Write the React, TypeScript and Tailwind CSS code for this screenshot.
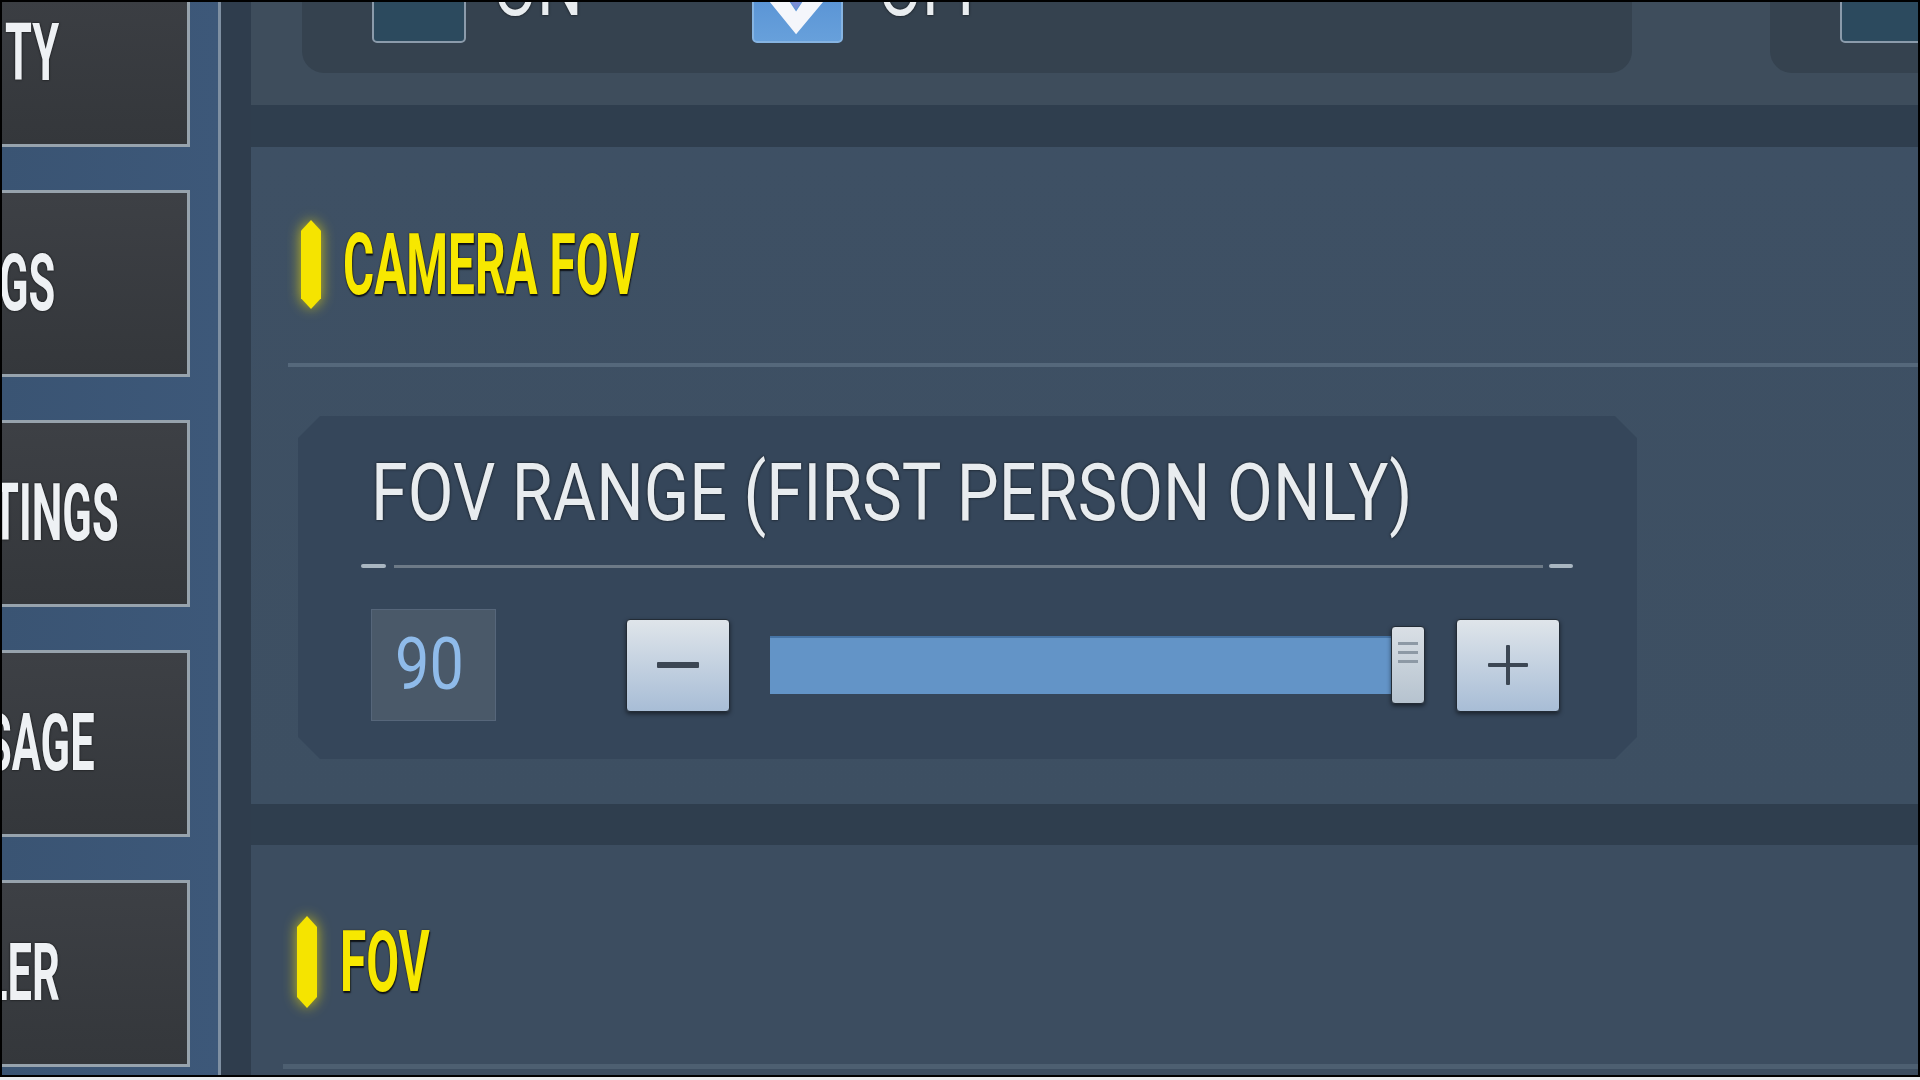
import React from 'react';

const navItems = [
  { label: 'TY', shift: 'ml-[3px]' },
  { label: 'GS', shift: 'ml-[-3px]' },
  { label: 'TINGS', shift: 'ml-[-10px]' },
  { label: 'SAGE', shift: 'ml-[-17px]' },
  { label: 'LER', shift: 'ml-[-18px]' },
];

function NavButton({ label, shift }: { label: string; shift: string }) {
  return (
    <div className="h-[187px] w-[188px] shrink-0 flex items-center overflow-hidden border-y-[3px] border-r-[3px] border-[#97a3ad] bg-gradient-to-b from-[#3d4045] to-[#34373b]">
      <span
        className={`inline-block whitespace-nowrap text-[79px] font-bold leading-none text-[#eef1f4] origin-left scale-x-[0.55] [text-shadow:0_0_3px_rgba(0,0,0,0.9)] ${shift}`}
      >
        {label}
      </span>
    </div>
  );
}

function Sidebar() {
  return (
    <div className="flex shrink-0">
      <div className="w-[216px] overflow-hidden bg-gradient-to-r from-[#3a5473] to-[#3d5879]">
        <div className="-mt-[42px] flex flex-col gap-[43px]">
          {navItems.map((item) => (
            <NavButton key={item.label} label={item.label} shift={item.shift} />
          ))}
        </div>
      </div>
      <div className="w-[3px] bg-[#7f90a2]" />
      <div className="w-[30px] bg-[#2f3d4d]" />
    </div>
  );
}

function Marker({ tall }: { tall: string }) {
  return (
    <div className="drop-shadow-[0_0_7px_rgba(245,225,0,0.75)]">
      <div className={`w-[20px] ${tall} bg-[#f5e400] [clip-path:polygon(50%_0,100%_12%,100%_88%,50%_100%,0_88%,0_12%)]`} />
    </div>
  );
}

function SectionTitle({ label, tall, gap }: { label: string; tall: string; gap: string }) {
  return (
    <div className={`flex items-center ${gap}`}>
      <Marker tall={tall} />
      <span className="inline-block whitespace-nowrap text-[86px] font-bold leading-none text-[#f7e800] origin-left scale-x-[0.555] [text-shadow:0_0_2px_#14140a,1px_2px_2px_rgba(0,0,0,0.8)]">
        {label}
      </span>
    </div>
  );
}

function CheckBox({ checked }: { checked?: boolean }) {
  if (checked) {
    return (
      <div className="w-[91px] h-[93px] shrink-0 rounded-[5px] border-2 border-[#86b4e2] bg-gradient-to-b from-[#4d88cf] to-[#67a0db] flex items-start justify-center">
        <svg width="91" height="93" viewBox="0 0 91 93">
          <polygon points="10,42 32,42 44,60 56,42 79,42 44,84" fill="#f4f6fb" />
          <polygon points="34,44 54,44 44,58" fill="#7b8fd6" />
        </svg>
      </div>
    );
  }
  return <div className="w-[94px] h-[93px] shrink-0 rounded-[5px] border-2 border-[#8b9bab] bg-[#2c4a5e]" />;
}

function ToggleLabel({ text }: { text: string }) {
  return (
    <span className="-mt-[2px] inline-block whitespace-nowrap text-[80px] font-normal leading-none text-[#e9edf0] origin-left scale-x-[0.8] [text-shadow:0_0_3px_rgba(0,0,0,0.8)]">
      {text}
    </span>
  );
}

function TopBand() {
  return (
    <div className="h-[103px] shrink-0 flex bg-[#3e4d5c] overflow-hidden">
      <div className="ml-[51px] w-[1330px] h-[71px] shrink-0 rounded-b-[22px] bg-[#35424f]">
        <div className="-mt-[52px] flex items-start pl-[70px]">
          <div className="w-[380px] flex items-start gap-[27px]">
            <CheckBox />
            <ToggleLabel text="ON" />
          </div>
          <div className="flex items-start gap-[35px]">
            <CheckBox checked />
            <ToggleLabel text="OFF" />
          </div>
        </div>
      </div>
      <div className="ml-[138px] flex-1 h-[71px] rounded-bl-[22px] bg-[#35424f]">
        <div className="-mt-[52px] pl-[70px]">
          <div className="w-[120px] h-[93px] rounded-[5px] border-2 border-[#8b9bab] bg-[#2c4a5e]" />
        </div>
      </div>
    </div>
  );
}

function StepButton({ sign }: { sign: 'minus' | 'plus' }) {
  return (
    <div className="w-[104px] h-[93px] shrink-0 rounded-[4px] border border-[#232c36] bg-gradient-to-b from-[#dfe5ea] to-[#a8bdd6] shadow-[0_2px_4px_rgba(0,0,0,0.5)] flex items-center justify-center">
      <svg width="46" height="46" viewBox="0 0 46 46">
        {sign === 'minus' ? (
          <rect x="2" y="20" width="42" height="6" rx="1" fill="#3c4754" />
        ) : (
          <>
            <rect x="3" y="21" width="40" height="4" rx="1" fill="#3c4754" />
            <rect x="21" y="3" width="4" height="40" rx="1" fill="#3c4754" />
          </>
        )}
      </svg>
    </div>
  );
}

function FovSlider({ value, max }: { value: number; max: number }) {
  const fill = Math.round((value / max) * 624);
  return (
    <div className="w-[656px] flex items-center">
      <div className="w-[624px] h-[58px] bg-[#2f3f50]">
        <div className="h-full bg-[#6394c7] border-t-2 border-[#4674a6]" style={{ width: `${fill}px` }} />
      </div>
      <div className="-ml-[3px] w-[34px] h-[78px] rounded-[4px] border border-[#232c36] bg-gradient-to-b from-[#d9dfe5] to-[#b6c3cf] shadow-[0_2px_4px_rgba(0,0,0,0.5)] flex flex-col items-center gap-[6px] pt-[15px]">
        <div className="w-[20px] h-[3px] bg-[#8d99a5]" />
        <div className="w-[20px] h-[3px] bg-[#8d99a5]" />
        <div className="w-[20px] h-[3px] bg-[#8d99a5]" />
      </div>
    </div>
  );
}

function FovCard() {
  return (
    <div className="ml-[47px] mt-[49px] w-[1339px] h-[343px] shrink-0 bg-[#35465a] [clip-path:polygon(22px_0,calc(100%-22px)_0,100%_22px,100%_calc(100%-22px),calc(100%-22px)_100%,22px_100%,0_calc(100%-22px),0_22px)]">
      <div className="pt-[38px] pl-[73px]">
        <span className="inline-block whitespace-nowrap text-[79px] font-normal leading-none text-[#e8ecef] origin-left scale-x-[0.843] [text-shadow:0_0_3px_rgba(0,0,0,0.8)]">
          FOV RANGE (FIRST PERSON ONLY)
        </span>
      </div>
      <div className="mt-[31px] ml-[63px] flex items-center">
        <div className="w-[25px] h-[4px] rounded-sm bg-[#a9b6c1]" />
        <div className="ml-[8px] w-[1149px] h-[3px] bg-[#6d7a87]" />
        <div className="ml-[6px] w-[24px] h-[4px] rounded-sm bg-[#a9b6c1]" />
      </div>
      <div className="mt-[41px] pl-[73px] flex items-center h-[112px]">
        <div className="w-[125px] h-[112px] shrink-0 border border-[#56667a] bg-[#4a5969] flex items-center justify-center pr-[8px]">
          <span className="inline-block text-[72px] font-normal leading-none text-[#8fbbea] scale-x-[0.85]">90</span>
        </div>
        <div className="ml-[130px]">
          <StepButton sign="minus" />
        </div>
        <div className="ml-[40px]">
          <FovSlider value={90} max={90} />
        </div>
        <div className="ml-[30px]">
          <StepButton sign="plus" />
        </div>
      </div>
    </div>
  );
}

function MainColumn() {
  return (
    <div className="flex-1 min-w-0 flex flex-col bg-[#2f3e4e]">
      <TopBand />
      <div className="h-[42px] shrink-0" />
      <div className="h-[657px] shrink-0 flex flex-col bg-gradient-to-b from-[#3e5064] to-[#3d4f62]">
        <div className="mt-[73px] ml-[50px] h-[89px] flex items-center">
          <SectionTitle label="CAMERA FOV" tall="h-[89px]" gap="gap-[22px]" />
        </div>
        <div className="mt-[54px] ml-[37px] h-[4px] bg-[#55687b]" />
        <FovCard />
      </div>
      <div className="h-[41px] shrink-0" />
      <div className="flex-1 flex flex-col bg-[#3c4d60]">
        <div className="mt-[71px] ml-[46px] h-[92px] flex items-center">
          <SectionTitle label="FOV" tall="h-[92px]" gap="gap-[23px]" />
        </div>
        <div className="mt-[56px] ml-[32px] h-[5px] bg-[#4d5f71]" />
      </div>
    </div>
  );
}

export default function App() {
  return (
    <div className="w-[1920px] h-[1080px] overflow-hidden flex flex-col bg-black font-['Roboto','Liberation_Sans',sans-serif]">
      <div className="flex-1 min-h-0 flex border-t-2 border-x-2 border-black">
        <Sidebar />
        <MainColumn />
      </div>
      <div className="h-[2px] shrink-0 bg-black" />
      <div className="h-[3px] shrink-0 bg-[#e9ecef]" />
    </div>
  );
}
